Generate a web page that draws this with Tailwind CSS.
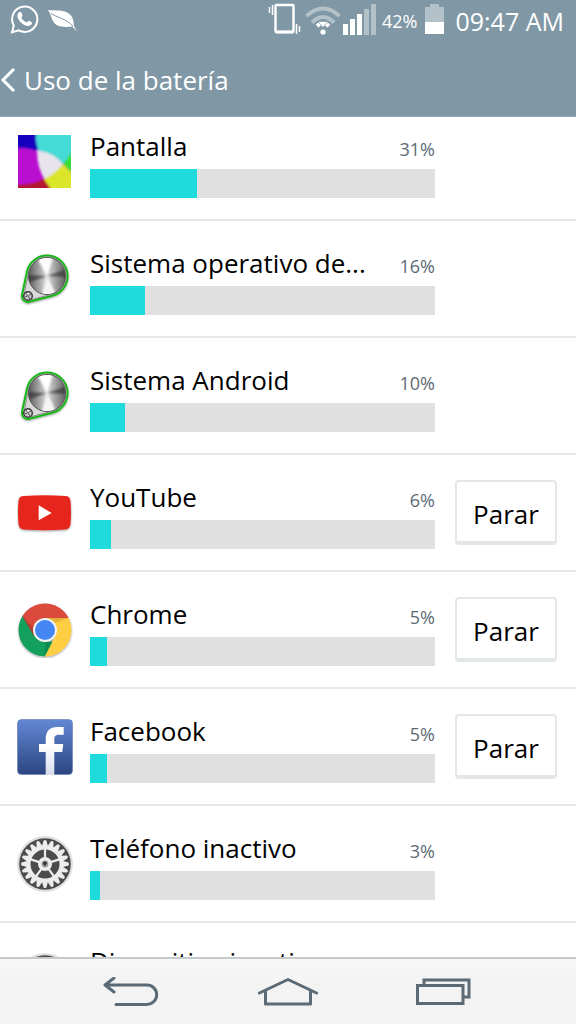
<!DOCTYPE html>
<html lang="es">
<head>
<meta charset="utf-8">
<meta name="viewport" content="width=device-width, initial-scale=1">
<title>Uso de la batería</title>
<script src="https://cdn.jsdelivr.net/npm/@tailwindcss/browser@4"></script>
</head>
<body class="flex h-screen flex-col overflow-hidden bg-white font-['Open_Sans',sans-serif] text-[26px] leading-9 text-black">

<svg class="absolute size-0" aria-hidden="true">
  <defs>
    <filter id="soft" x="-20%" y="-20%" width="140%" height="140%"><feGaussianBlur stdDeviation="1.3"/></filter>
    <filter id="shade" x="-20%" y="-20%" width="140%" height="140%"><feDropShadow dx="0" dy="1" stdDeviation="1" flood-opacity=".4"/></filter>
    <linearGradient id="metal" x1="0" y1="0" x2="1" y2="0"><stop offset="0" stop-color="#5c5c5c"/><stop offset=".3" stop-color="#a9a9a9"/><stop offset=".5" stop-color="#dcdcdc"/><stop offset=".7" stop-color="#a9a9a9"/><stop offset="1" stop-color="#606060"/></linearGradient>
    <linearGradient id="fb" x1="0" y1="0" x2="0" y2="1"><stop offset="0" stop-color="#6288d4"/><stop offset="1" stop-color="#2b4581"/></linearGradient>
    <linearGradient id="fbf" x1="0" y1="0" x2="0" y2="1"><stop offset=".4" stop-color="#fff"/><stop offset="1" stop-color="#d5dcec"/></linearGradient>
    <clipPath id="disc"><circle cx="30" cy="25" r="18"/></clipPath>
    <clipPath id="wheel"><circle cx="28" cy="28" r="26.5"/></clipPath>
    <clipPath id="square"><path d="M1 1h53v53H1z"/></clipPath>
  </defs>
  <symbol id="system" viewBox="0 0 56 56">
    <path d="M10 20.8A20.5 20.5 0 1 1 35.2 44.8L12.500 50.800A6 6 0 0 1 5.100 43.800Z" fill="#d9d9d9" stroke="#16b816" stroke-width="2" filter="url(#shade)"/>
    <path d="M11.500 22A19 19 0 1 1 34 43.500L13 49 7 44Z" fill="none" stroke="#777" stroke-width=".8"/>
    <circle cx="30" cy="25" r="18.500" fill="url(#metal)" stroke="#555"/>
    <g clip-path="url(#disc)"><g filter="url(#soft)">
      <path d="M30 25L18 3h19z" fill="#fff"/><path d="M30 25L24 47h17z" fill="#f5f5f5"/>
      <path d="M30 25L10 24v8z" fill="#333" opacity=".65"/><path d="M30 25L50 18v8z" fill="#333" opacity=".65"/>
    </g></g>
    <circle cx="11" cy="45" r="4.300" fill="#c9c9c9" stroke="#3e3e3e" stroke-width="1.500"/>
    <path d="M8 46l6-3M11 45l-2-3M11 45l2 3" stroke="#555" stroke-width="1"/><path d="M11 45l-1-3h2z" fill="#fff"/>
  </symbol>
  <symbol id="gear" viewBox="0 0 56 56">
    <circle cx="28" cy="28" r="27.500" fill="#e3e3e3" stroke="#d2d2d2" stroke-width=".6"/>
    <circle cx="28" cy="28" r="25.800" fill="#4b4b4b"/>
    <g fill="#ededed">
      <g id="quarter">
        <path id="tooth" d="M24.800 11L26.600 4.500Q28 3.500 29.400 4.500L31.200 11z"/>
        <use href="#tooth" transform="rotate(18 28 28)"/><use href="#tooth" transform="rotate(36 28 28)"/>
        <use href="#tooth" transform="rotate(54 28 28)"/><use href="#tooth" transform="rotate(72 28 28)"/>
      </g>
      <use href="#quarter" transform="rotate(90 28 28)"/><use href="#quarter" transform="rotate(180 28 28)"/><use href="#quarter" transform="rotate(270 28 28)"/>
      <circle cx="28" cy="28" r="7"/>
    </g>
    <circle cx="28" cy="28" r="16.500" fill="none" stroke="#ededed" stroke-width="4"/>
    <g stroke="#ededed" stroke-width="2.200">
      <path id="spoke" d="M28 22V13"/>
      <use href="#spoke" transform="rotate(72 28 28)"/><use href="#spoke" transform="rotate(144 28 28)"/><use href="#spoke" transform="rotate(216 28 28)"/><use href="#spoke" transform="rotate(288 28 28)"/>
    </g>
    <circle cx="28" cy="28" r="3.400" fill="#9a9a9a"/><path d="M26 28a2 2 0 0 1 4-1l-2 3z" fill="#333"/>
  </symbol>
</svg>

<header class="shrink-0 border-b border-[#93a7b2] bg-[#8097a5] text-white">
  <div class="flex h-[41px] items-center justify-between pr-3 pl-[10px]">
    <div class="mb-[3px] flex items-center gap-[9px]">
      <svg class="h-[30px] w-[29px]" viewBox="0 0 29 30" role="img" aria-label="WhatsApp">
        <path d="M2 28.300L3.800 21.500A12.600 12.600 0 1 1 8.700 26.300Z" fill="none" stroke="#fff" stroke-width="2"/>
        <path d="M9 8.300c.9-.8 1.900-.7 2.300.2l1.200 2.700c.3.800-.9 1.800-1.200 2.300.9 2.100 2.800 3.900 5.300 4.900.7-.4 1.500-2 2.300-1.700l2.800 1.500c.6.400.1 2.200-.9 2.900-1.900 1.400-4.500.9-7.300-.7-3-1.700-5.500-4.600-6-7.400-.3-1.900.3-3.600 1.500-4.700z" fill="#fff"/>
      </svg>
      <svg class="mt-1 h-[24px] w-[30px]" viewBox="0 0 30 24" role="img" aria-label="Ahorro de energía">
        <path d="M0 1C8 2 16 0 22 5.500c3.500 3 3.500 8 4 11.500l2.800 5.500-4.400-5.100C19 18 10 19 6 13.500 3 9.500 3 5 0 1z" fill="#fff"/>
        <path d="M3 4.500c5 3.500 15 5 22 12.500" fill="none" stroke="#8097a5" stroke-width="1"/>
      </svg>
    </div>
    <div class="flex items-center">
      <svg class="mr-[3px] mb-[3px] h-8 w-[34px]" viewBox="0 0 34 32" role="img" aria-label="Vibración" fill="none" stroke="#fff">
        <rect x="7.500" y="2" width="18" height="27" rx="1" stroke-width="2.400"/><path d="M8 29h17" stroke-width="3"/>
        <path d="M1.500 4v6M4.500 2v10M28.500 21v10M31.500 23v6" stroke-width="1.500"/>
      </svg>
      <svg class="mr-[2px] mb-[3px] h-8 w-[36px]" viewBox="0 0 36 32" role="img" aria-label="Wi-Fi" fill="none">
        <path d="M1.500 13Q18 -2 34.500 13M7 19.500Q18 8.500 29 19.500" stroke="#b3c1c9" stroke-width="4"/>
        <path d="M12 23Q18 17.500 24 23" stroke="#fff" stroke-width="4"/><path d="M13 18.500h10l-5 6z" fill="#fff" stroke="#8097a5" stroke-width=".7"/><circle cx="18" cy="29" r="2.600" fill="#fff"/>
      </svg>
      <svg class="mr-[5px] mb-[3px] h-8 w-[34px]" viewBox="0 0 34 32" role="img" aria-label="Señal móvil" fill="#fff">
        <path d="M0 21h5v11H0zM7 16h5v16H7zM14 11h5v21h-5z"/><path d="M21 6h5v26h-5zM28 1h5v31h-5z" fill="#b3c1c9"/>
      </svg>
      <span class="mr-2 text-lg">42%</span>
      <svg class="mr-[10px] mb-[3px] h-[30px] w-5" viewBox="0 0 20 30" role="img" aria-label="Batería"><path d="M0 3h5V0h9v3h5v15H0z" fill="#b3c1c9"/><path d="M0 18h19v12H0z" fill="#fff"/></svg>
      <time class="text-[25px]">09:47 AM</time>
    </div>
  </div>
  <h1 class="h-[75px] pt-[21px]">
    <a href="#" class="flex w-fit items-center gap-2">
      <svg class="h-6 w-4" viewBox="0 0 16 24" fill="none" stroke="#fff" stroke-width="3" aria-hidden="true"><path d="M14 1L3 12l11 11"/></svg>
      <span>Uso de la batería</span>
    </a>
  </h1>
</header>

<main class="min-h-0 flex-1 overflow-hidden">
  <ul class="-mt-[13px]">
    <li class="flex items-center border-b-2 border-[#e8e8e8] pr-[19px] pl-[17px]">
      <svg class="size-14 shrink-0" viewBox="0 0 56 56" aria-hidden="true">
        <g clip-path="url(#square)"><path d="M1 1h53v53H1z" fill="#b80fd0"/><g filter="url(#soft)">
          <path d="M-4-4h26l1 22Q12 12-4 14z" fill="#1600bd"/>
          <path d="M-4 51Q17 52 28 44l11 16H-4z" fill="#b3122d"/>
          <path d="M20 16Q35 16 46 30 38 42 28 46 20 34 20 16z" fill="#e8e4ec"/>
          <path d="M46 30L58 12v30z" fill="#38dd35"/>
          <path d="M20-4Q17 8 22 17 36 18 46 30 55 20 58 8V-4z" fill="#45dcd8"/>
          <path d="M46 30Q38 40 27 45l10 15h21V42z" fill="#dbe52c"/>
        </g></g>
      </svg>
      <div class="ml-[17px] min-w-0 flex-1 pt-6 pb-[21px]">
        <div class="flex items-baseline justify-between gap-4"><h2 class="truncate">Pantalla</h2><span class="text-lg text-[#5d6a75]">31%</span></div>
        <div class="mt-[5px] h-[29px] bg-[#e0e0e0]" role="progressbar" aria-label="Pantalla" aria-valuenow="31"><div class="h-full bg-[#1fdbdc]" style="width:31%"></div></div>
      </div>
      <div class="ml-5 w-[102px] shrink-0"></div>
    </li>
    <li class="flex items-center border-b-2 border-[#e8e8e8] pr-[19px] pl-[17px]">
      <svg class="size-14 shrink-0" aria-hidden="true"><use href="#system"/></svg>
      <div class="ml-[17px] min-w-0 flex-1 pt-6 pb-[21px]">
        <div class="flex items-baseline justify-between gap-4"><h2 class="truncate">Sistema operativo de...</h2><span class="text-lg text-[#5d6a75]">16%</span></div>
        <div class="mt-[5px] h-[29px] bg-[#e0e0e0]" role="progressbar" aria-label="Sistema operativo" aria-valuenow="16"><div class="h-full bg-[#1fdbdc]" style="width:16%"></div></div>
      </div>
      <div class="ml-5 w-[102px] shrink-0"></div>
    </li>
    <li class="flex items-center border-b-2 border-[#e8e8e8] pr-[19px] pl-[17px]">
      <svg class="size-14 shrink-0" aria-hidden="true"><use href="#system"/></svg>
      <div class="ml-[17px] min-w-0 flex-1 pt-6 pb-[21px]">
        <div class="flex items-baseline justify-between gap-4"><h2 class="truncate">Sistema Android</h2><span class="text-lg text-[#5d6a75]">10%</span></div>
        <div class="mt-[5px] h-[29px] bg-[#e0e0e0]" role="progressbar" aria-label="Sistema Android" aria-valuenow="10"><div class="h-full bg-[#1fdbdc]" style="width:10%"></div></div>
      </div>
      <div class="ml-5 w-[102px] shrink-0"></div>
    </li>
    <li class="flex items-center border-b-2 border-[#e8e8e8] pr-[19px] pl-[17px]">
      <svg class="size-14 shrink-0" viewBox="0 0 56 56" aria-hidden="true">
        <path d="M7 11Q28 9.500 48 11 53 11 53.500 16 54.500 28 53.500 39 53 44 48 44.500 28 46 7 44.500 2 44 1.500 39 .5 28 1.500 16 2 11 7 11z" fill="#e6281e" filter="url(#shade)"/><path d="M21.700 20.300v15l13-7.300z" fill="#fff"/>
      </svg>
      <div class="ml-[17px] min-w-0 flex-1 pt-6 pb-[21px]">
        <div class="flex items-baseline justify-between gap-4"><h2 class="truncate">YouTube</h2><span class="text-lg text-[#5d6a75]">6%</span></div>
        <div class="mt-[5px] h-[29px] bg-[#e0e0e0]" role="progressbar" aria-label="YouTube" aria-valuenow="6"><div class="h-full bg-[#1fdbdc]" style="width:6%"></div></div>
      </div>
      <button type="button" class="ml-5 h-[65px] w-[102px] shrink-0 rounded-sm border-2 border-b-4 border-[#e4e7e8] bg-white pt-1" aria-label="Parar YouTube">Parar</button>
    </li>
    <li class="flex items-center border-b-2 border-[#e8e8e8] pr-[19px] pl-[17px]">
      <svg class="size-14 shrink-0" viewBox="0 0 56 56" aria-hidden="true">
        <circle cx="28" cy="28" r="26.500" fill="#ccc" filter="url(#shade)"/>
        <g clip-path="url(#wheel)">
          <path d="M0 0h56v16H28L17 34 5 14z" fill="#dc4a3d"/><path d="M5 13L17.500 34 28 40h10L27 56H0V13z" fill="#13a05c"/>
          <path d="M28 16h28v40H27l11-21V22z" fill="#ffce43"/>
          <path d="M28 16h23l-13 5z" fill="#d9a52d" opacity=".7"/><path d="M5 14l12 21 1-8z" fill="#9c2f25" opacity=".5"/><path d="M27 55l10-20-8 4z" fill="#0a7340" opacity=".5"/>
        </g>
        <circle cx="28" cy="28" r="12" fill="#f2f2f2"/><circle cx="28" cy="28" r="10" fill="#4486f4"/>
      </svg>
      <div class="ml-[17px] min-w-0 flex-1 pt-6 pb-[21px]">
        <div class="flex items-baseline justify-between gap-4"><h2 class="truncate">Chrome</h2><span class="text-lg text-[#5d6a75]">5%</span></div>
        <div class="mt-[5px] h-[29px] bg-[#e0e0e0]" role="progressbar" aria-label="Chrome" aria-valuenow="5"><div class="h-full bg-[#1fdbdc]" style="width:5%"></div></div>
      </div>
      <button type="button" class="ml-5 h-[65px] w-[102px] shrink-0 rounded-sm border-2 border-b-4 border-[#e4e7e8] bg-white pt-1" aria-label="Parar Chrome">Parar</button>
    </li>
    <li class="flex items-center border-b-2 border-[#e8e8e8] pr-[19px] pl-[17px]">
      <svg class="size-14 shrink-0" viewBox="0 0 56 56" aria-hidden="true">
        <rect x=".5" y=".5" width="55" height="55" rx="4" fill="url(#fb)" stroke="#6a82b5" stroke-width=".7"/>
        <path d="M28.700 56V33H22v-8h6.700v-5C28.700 12 33 8 40 8h6.700v7.700H42c-3.500 0-4.700 1.500-4.700 4.500V25h9l-1 8h-8v23z" fill="url(#fbf)"/>
      </svg>
      <div class="ml-[17px] min-w-0 flex-1 pt-6 pb-[21px]">
        <div class="flex items-baseline justify-between gap-4"><h2 class="truncate">Facebook</h2><span class="text-lg text-[#5d6a75]">5%</span></div>
        <div class="mt-[5px] h-[29px] bg-[#e0e0e0]" role="progressbar" aria-label="Facebook" aria-valuenow="5"><div class="h-full bg-[#1fdbdc]" style="width:5%"></div></div>
      </div>
      <button type="button" class="ml-5 h-[65px] w-[102px] shrink-0 rounded-sm border-2 border-b-4 border-[#e4e7e8] bg-white pt-1" aria-label="Parar Facebook">Parar</button>
    </li>
    <li class="flex items-center border-b-2 border-[#e8e8e8] pr-[19px] pl-[17px]">
      <svg class="size-14 shrink-0" aria-hidden="true"><use href="#gear"/></svg>
      <div class="ml-[17px] min-w-0 flex-1 pt-6 pb-[21px]">
        <div class="flex items-baseline justify-between gap-4"><h2 class="truncate">Teléfono inactivo</h2><span class="text-lg text-[#5d6a75]">3%</span></div>
        <div class="mt-[5px] h-[29px] bg-[#e0e0e0]" role="progressbar" aria-label="Teléfono inactivo" aria-valuenow="3"><div class="h-full bg-[#1fdbdc]" style="width:3%"></div></div>
      </div>
      <div class="ml-5 w-[102px] shrink-0"></div>
    </li>
    <li class="flex items-center border-b-2 border-[#e8e8e8] pr-[19px] pl-[17px]">
      <svg class="size-14 shrink-0" aria-hidden="true"><use href="#gear"/></svg>
      <div class="ml-[17px] min-w-0 flex-1 pt-5 pb-[25px]">
        <h2 class="truncate">Dispositivo inactivo</h2>
        <div class="mt-[5px] h-[29px] bg-[#e0e0e0]"></div>
      </div>
      <div class="ml-5 w-[102px] shrink-0"></div>
    </li>
  </ul>
</main>

<nav class="flex h-[67px] shrink-0 items-center justify-center gap-24 border-t-2 border-[#c3c9cd] bg-linear-to-b from-[#f8f8f8] to-[#f3f3f3] to-40%" aria-label="Navegación">
  <button type="button" aria-label="Atrás"><svg class="h-[30px] w-[60px]" viewBox="0 0 60 30" fill="none" stroke="#5b6a74" stroke-width="3" stroke-linecap="round" stroke-linejoin="round"><path d="M12 1L3 8l9 7M4 8h41a9.700 9.700 0 0 1 0 19.400H14"/></svg></button>
  <button type="button" aria-label="Inicio"><svg class="h-[30px] w-[60px]" viewBox="0 0 60 30" fill="none" stroke="#5b6a74" stroke-width="3" stroke-linecap="round" stroke-linejoin="round"><path d="M1.500 16L30 2.500 58.500 16M7.500 14v13h45V14"/></svg></button>
  <button type="button" aria-label="Recientes"><svg class="h-[30px] w-[60px]" viewBox="0 0 60 30" fill="none" stroke="#5b6a74" stroke-width="3"><path d="M3.500 8.500h45.500v18H3.500zM10 8V3h45v17h-5"/></svg></button>
</nav>
</body>
</html>
